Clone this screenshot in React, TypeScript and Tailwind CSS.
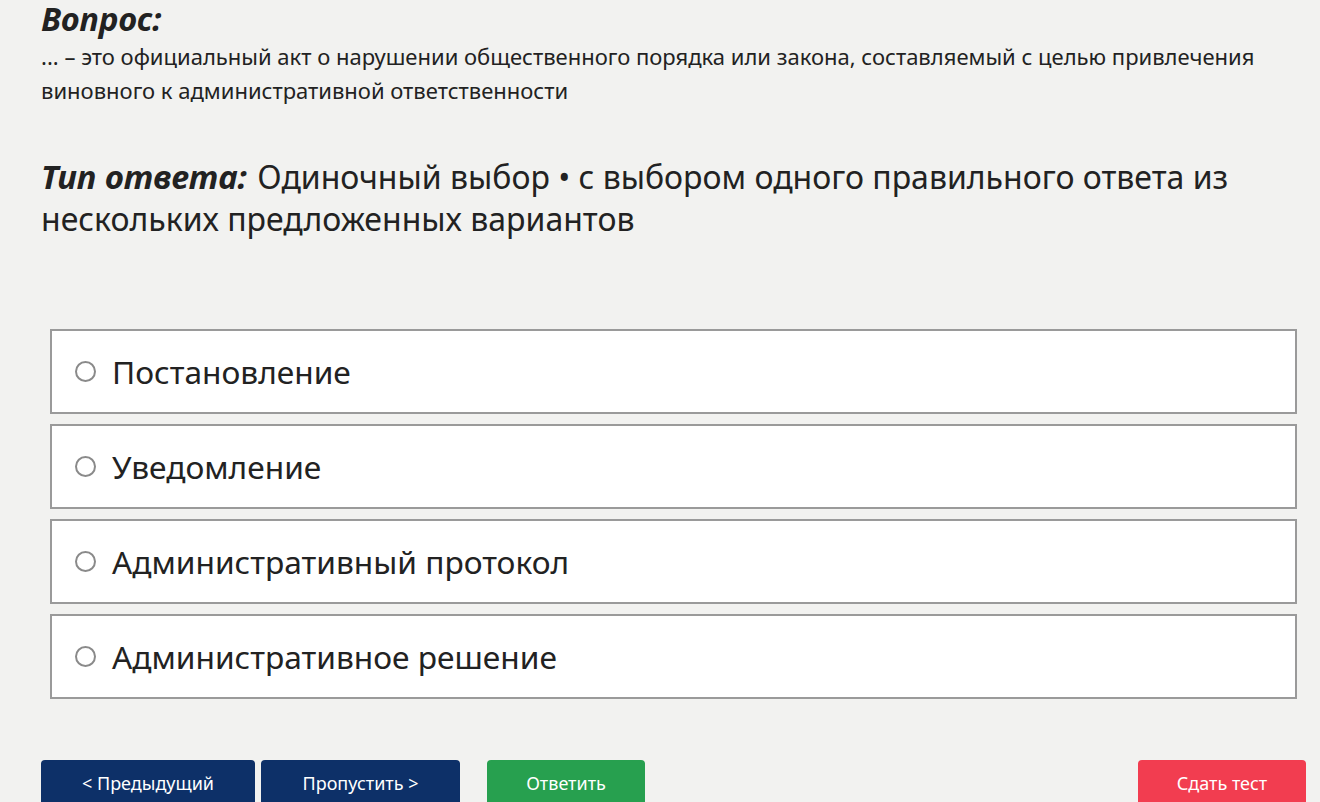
const OPTIONS = [
  "Постановление",
  "Уведомление",
  "Административный протокол",
  "Административное решение",
];

export default function App() {
  return (
    <div
      className="min-h-[802px] w-[1320px] overflow-hidden bg-[#f2f2f0] text-[#222]"
      style={{ fontFamily: '"Noto Sans", "Open Sans", sans-serif' }}
    >
      <div className="pl-[41px] pr-[14px] pt-[1px]">
        <h2 className="inline-block pr-[4px] text-[32.5px] font-bold italic leading-[36px]">Вопрос:</h2>
        <p className="mt-[2px] pr-[10px] text-[22px] leading-[34px]">
          ... – это официальный акт о нарушении общественного порядка или закона, составляемый с целью
          привлечения виновного к административной ответственности
        </p>

        <p className="mt-[49px] pr-[60px] text-[32px] leading-[42px]">
          <span className="pr-[2px] text-[33px] font-bold italic">Тип ответа:</span> Одиночный выбор • с
          выбором одного правильного ответа из нескольких предложенных вариантов
        </p>

        <div className="mx-[9px] mt-[89px] flex flex-col gap-[10px]">
          {OPTIONS.map((opt) => (
            <label
              key={opt}
              className="flex h-[85px] items-center border-2 border-[#9a9a9a] bg-white pl-[23px]"
            >
              <span className="h-[21px] w-[21px] rounded-full border-2 border-[#8a8a8a] bg-white" />
              <span className="ml-[16px] text-[31.7px]">{opt}</span>
            </label>
          ))}
        </div>

        <div className="mt-[61px] flex items-start text-[18px] text-white">
          <button className="h-[46px] w-[214px] rounded-[4px] bg-[#0d3068]">&lt; Предыдущий</button>
          <button className="ml-[6px] h-[46px] w-[199px] rounded-[4px] bg-[#0d3068]">Пропустить &gt;</button>
          <button className="ml-[27px] h-[46px] w-[158px] rounded-[4px] bg-[#27a04f]">Ответить</button>
          <button className="ml-auto h-[46px] w-[168px] rounded-[4px] bg-[#f23d50]">Сдать тест</button>
        </div>
      </div>
    </div>
  );
}
